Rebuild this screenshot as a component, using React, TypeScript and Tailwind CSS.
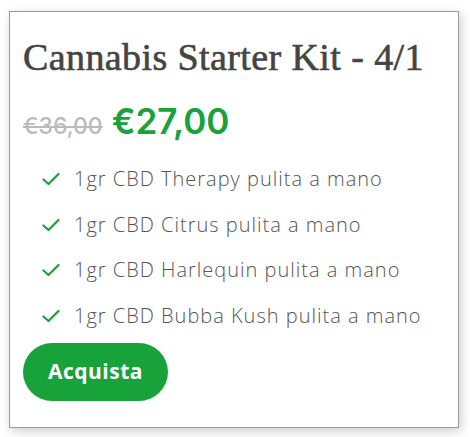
import React from "react";

const items = [
  "1gr CBD Therapy pulita a mano",
  "1gr CBD Citrus pulita a mano",
  "1gr CBD Harlequin pulita a mano",
  "1gr CBD Bubba Kush pulita a mano",
];

function Check() {
  return (
    <svg width="18" height="14" viewBox="0 0 18 14" fill="none">
      <path d="M1.5 7.5 L6.5 12 L16.5 2" stroke="#17a23a" strokeWidth="2.2" strokeLinecap="round" strokeLinejoin="round" />
    </svg>
  );
}

export default function App() {
  return (
    <div className="w-[470px] h-[437px] bg-white pt-[11px] pl-[9px]">
      <div className="w-[450px] h-[417px] border border-[#9a9a9a] bg-white shadow-[2px_3px_10px_rgba(0,0,0,0.2)] px-[13px] pt-[24px]">
        <h1 className="text-[38px] leading-[42px] tracking-[0.4px] text-[#444] font-normal [-webkit-text-stroke:0.6px_#444]" style={{ fontFamily: '"Liberation Serif", serif' }}>
          Cannabis Starter Kit - 4/1
        </h1>
        <div className="flex items-baseline gap-[9px] mt-[18px] h-[51px]" style={{ fontFamily: 'Inter, sans-serif' }}>
          <span className="text-[23px] leading-[51px] text-[#bbb] line-through font-medium">€36,00</span>
          <span className="text-[35px] leading-[51px] text-[#17a23a] font-semibold">€27,00</span>
        </div>
        <ul className="mt-[19px] pl-[19px] flex flex-col gap-[19.5px]" style={{ fontFamily: '"Open Sans", sans-serif' }}>
          {items.map((t) => (
            <li key={t} className="flex items-center gap-[14px] text-[20px] leading-[26px] tracking-[1px] text-[#555] font-light">
              <Check />
              <span>{t}</span>
            </li>
          ))}
        </ul>
        <button className="mt-[14px] w-[145px] h-[58px] rounded-full bg-[#17a23a] text-white text-[21px] tracking-[0.5px] font-bold" style={{ fontFamily: '"Open Sans", sans-serif' }}>
          Acquista
        </button>
      </div>
    </div>
  );
}
